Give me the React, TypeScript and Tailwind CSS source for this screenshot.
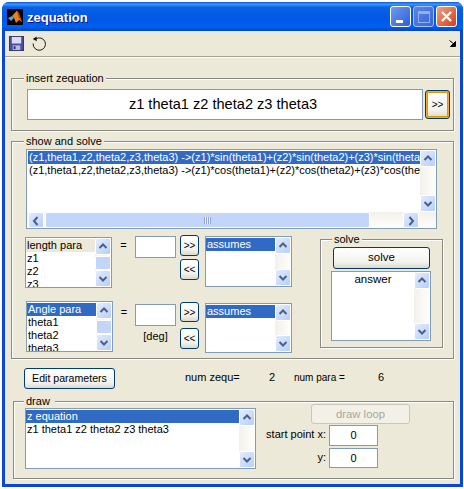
import React from "react";

const Chevron = ({ dir }: { dir: "up" | "down" | "left" | "right" }) => {
  const d = { up: "M2.5 7 L6 3.5 L9.5 7", down: "M2.5 4 L6 7.5 L9.5 4", left: "M7.5 2 L4 6 L7.5 10", right: "M4.5 2 L8 6 L4.5 10" }[dir];
  return (
    <svg width="12" height="11" viewBox="0 0 12 11">
      <path d={d} fill="none" stroke="#4d6185" strokeWidth="2" />
    </svg>
  );
};

const SBtn = ({ dir, className = "" }: { dir: "up" | "down" | "left" | "right"; className?: string }) => (
  <div className={`flex shrink-0 items-center justify-center rounded-[2px] border border-white bg-[linear-gradient(135deg,#e3ebfe,#b8cefa)] ${className}`}>
    <Chevron dir={dir} />
  </div>
);

const VScroll = ({ thumb = false }: { thumb?: boolean }) => (
  <div className="flex h-full w-[16px] shrink-0 flex-col justify-between bg-[linear-gradient(90deg,#f3f1ec,#fefefb)]">
    <SBtn dir="up" className="h-[17px] w-[16px]" />
    {thumb && <div className="h-[14px] w-[16px] rounded-[2px] border border-white bg-[#c4d5fb]" />}
    <SBtn dir="down" className="h-[17px] w-[16px]" />
  </div>
);

const Row = ({ children, sel, soft, className = "" }: { children: React.ReactNode; sel?: boolean; soft?: boolean; className?: string }) => (
  <div className={`h-[13px] whitespace-nowrap text-[11px] leading-[13px] ${sel ? "bg-[#316ac5] text-white" : soft ? "bg-[#ece9d8] text-black" : "text-black"} ${className}`}>
    {children}
  </div>
);

const ListBox = ({ rows, selected, soft, thumb, className = "" }: { rows: string[]; selected?: boolean; soft?: boolean; thumb?: boolean; className?: string }) => (
  <div className={`flex shrink-0 overflow-hidden border border-[#7f9db9] bg-white ${className}`}>
    <div className="min-w-0 flex-1 overflow-hidden pt-px">
      {rows.map((r, i) => (
        <Row key={r} sel={i === 0 && selected} soft={i === 0 && soft} className="pl-px">
          {r}
        </Row>
      ))}
    </div>
    <VScroll thumb={thumb} />
  </div>
);

const Btn = ({ children, className = "" }: { children: React.ReactNode; className?: string }) => (
  <div className={`flex shrink-0 items-center justify-center rounded-[3px] border border-[#003c74] bg-[linear-gradient(180deg,#fff,#f3f3ee_70%,#dcd8cb)] text-black ${className}`}>
    {children}
  </div>
);

const Edit = ({ children, className = "" }: { children?: React.ReactNode; className?: string }) => (
  <div className={`flex shrink-0 items-center justify-center border border-[#7f9db9] bg-white text-black ${className}`}>{children}</div>
);

const Group = ({ label, labelClass = "left-[14px]", className = "", children }: { label: string; labelClass?: string; className?: string; children: React.ReactNode }) => (
  <div className={`relative shrink-0 border border-[#8a8a85] shadow-[inset_1px_1px_0_#fff,1px_1px_0_#fff] ${className}`}>
    <div className={`absolute -top-[8px] whitespace-nowrap bg-[#ece9d8] px-[2px] text-[11px] leading-[14px] text-black ${labelClass}`}>{label}</div>
    {children}
  </div>
);

const MatlabIcon = () => (
  <svg width="16" height="16" viewBox="0 0 16 16" className="shrink-0">
    <rect width="16" height="16" fill="#000" />
    <path d="M1 9 L5 7 L7 9 L4 12 Z" fill="#4aa3d8" />
    <path d="M5 7 L10 1.5 L15 13 L12 11 L9 14 L7 9 Z" fill="#e8801c" />
    <path d="M10 1.5 L11.5 8 L15 13 L12 4 Z" fill="#c9361a" />
  </svg>
);

const Floppy = () => (
  <svg width="15" height="15" viewBox="0 0 16 16">
    <rect x="0.5" y="0.5" width="15" height="15" fill="#4a4f9e" stroke="#2d2f6e" />
    <rect x="3" y="1" width="10" height="7" fill="#d9dcf5" />
    <rect x="4" y="10" width="8" height="5" fill="#b9bcd0" />
    <rect x="5" y="11" width="2" height="3" fill="#2d2f6e" />
  </svg>
);

const Undo = () => (
  <svg width="15" height="15" viewBox="0 0 16 16">
    <path d="M4 3.2 A6.6 6.6 0 1 1 1.2 8" fill="none" stroke="#111" strokeWidth="1" />
    <path d="M0.8 3.2 L5 0.6 L5 5.6 Z" fill="#111" />
  </svg>
);

const LONG1 = "(z1,theta1,z2,theta2,z3,theta3) ->(z1)*sin(theta1)+(z2)*sin(theta2)+(z3)*sin(theta3)";
const LONG2 = "(z1,theta1,z2,theta2,z3,theta3) ->(z1)*cos(theta1)+(z2)*cos(theta2)+(z3)*cos(theta3)";

export default function App() {
  return (
    <div className="h-[489px] w-[464px] overflow-hidden bg-white pl-[2px] pt-[2px] font-['Liberation_Sans',Arial,sans-serif]">
      <div className="flex h-[485px] w-[461px] flex-col overflow-hidden rounded-t-[7px] bg-[#0a47d8] px-[3px] pb-[3px]">
        {/* title bar */}
        <div className="-mx-[3px] flex h-[29px] shrink-0 items-center bg-[linear-gradient(180deg,#0a5be0_0%,#3d95ff_8%,#0a62e8_18%,#0058e4_55%,#0060f0_85%,#0046c8_100%)] pl-[5px] pr-[6px]">
          <MatlabIcon />
          <span className="ml-[4px] pt-[2px] text-[13px] font-bold leading-none text-white [text-shadow:1px_1px_#0f1089]">zequation</span>
          <div className="ml-auto flex items-center gap-[2px]">
            <div className="flex h-[21px] w-[21px] items-end justify-start rounded-[3px] border border-white bg-[linear-gradient(135deg,#6f9bf2,#2a5fd9)] pb-[3px] pl-[5px]">
              <div className="h-[3px] w-[7px] bg-white" />
            </div>
            <div className="flex h-[21px] w-[21px] items-center justify-center rounded-[3px] border border-[#a9c2f4] bg-[linear-gradient(135deg,#5a85e6,#3a66d8)]">
              <div className="h-[12px] w-[12px] border border-t-[3px] border-[#8fb0f0]" />
            </div>
            <div className="flex h-[21px] w-[21px] items-center justify-center rounded-[3px] border border-white bg-[linear-gradient(135deg,#f0a080,#d0401c)]">
              <svg width="13" height="13" viewBox="0 0 13 13">
                <path d="M2 2 L11 11 M11 2 L2 11" stroke="#fff" strokeWidth="2.4" />
              </svg>
            </div>
          </div>
        </div>

        {/* client */}
        <div className="flex min-h-0 flex-1 flex-col bg-[#ece9d8]">
          {/* toolbar */}
          <div className="flex h-[26px] shrink-0 items-center border-b border-b-[#a5a397] pl-[4px] pr-[2px] shadow-[0_1px_0_#fff]">
            <Floppy />
            <div className="ml-[8px]">
              <Undo />
            </div>
            <svg width="8" height="7" viewBox="0 0 8 7" className="ml-auto mr-[1px]">
              <path d="M0.5 0.5 L5 4 M6.5 1.5 L6.5 6.5 L1.5 6.5 Z" stroke="#000" fill="#000" />
            </svg>
          </div>

          {/* insert zequation */}
          <Group label="insert zequation" labelClass="left-[12px]" className="ml-[6px] mt-[21px] h-[53px] w-[443px]">
            <div className="ml-[15px] mt-[10px] flex items-center">
              <Edit className="h-[31px] w-[396px] pr-[4px] text-[14.6px]">z1 theta1 z2 theta2 z3 theta3</Edit>
              <Btn className="ml-[2px] h-[29px] w-[25px] text-[10px] shadow-[inset_0_0_0_1px_#f0a93a,inset_0_0_0_2px_#e59700]">
                <span className="border border-dotted border-transparent">&gt;&gt;</span>
              </Btn>
            </div>
          </Group>

          {/* show and solve */}
          <Group label="show and solve" labelClass="left-[12px]" className="ml-[6px] mt-[10px] h-[218px] w-[443px]">
            <div className="ml-[14px] mt-[7px] flex h-[80px] w-[411px] flex-col overflow-hidden border border-[#7f9db9] bg-white">
              <div className="flex h-[63px] min-h-0">
                <div className="min-w-0 flex-1 overflow-hidden pl-px pt-px">
                  <Row sel className="pl-px">{LONG1}</Row>
                  <Row className="pl-px">{LONG2}</Row>
                </div>
                <VScroll />
              </div>
              <div className="flex h-[16px] shrink-0 bg-[linear-gradient(180deg,#f3f1ec,#fefefb)] pl-px">
                <SBtn dir="left" className="h-[16px] w-[16px]" />
                <div className="ml-px flex h-[16px] w-[325px] items-center justify-center rounded-[2px] border border-white bg-[#c4d5fb]">
                  <div className="h-[7px] w-[7px] bg-[repeating-linear-gradient(90deg,#8ea6d8_0_1px,#eef3fe_1px_2px)]" />
                </div>
                <SBtn dir="right" className="ml-[33px] h-[16px] w-[16px]" />
                <div className="w-[17px] shrink-0" />
              </div>
            </div>

            <div className="mt-[6px] flex">
              <div className="w-[280px] shrink-0">
                {/* first row */}
                <div className="flex">
                  <ListBox rows={["length para", "z1", "z2", "z3"]} soft thumb className="ml-[13px] mt-[2px] h-[51px] w-[87px]" />
                  <div className="mt-[3px] w-[23px] shrink-0 text-center text-[11px] leading-[14px] text-black">=</div>
                  <Edit className="mt-px h-[22px] w-[41px]" />
                  <div className="ml-[4px] flex w-[19px] shrink-0 flex-col gap-[3px]">
                    <Btn className="h-[21px] text-[10px]">&gt;&gt;</Btn>
                    <Btn className="h-[21px] text-[10px]">&lt;&lt;</Btn>
                  </div>
                  <ListBox rows={["assumes"]} selected className="ml-[6px] mt-px h-[51px] w-[87px]" />
                </div>
                {/* second row */}
                <div className="mt-[13px] flex">
                  <ListBox rows={["Angle para", "theta1", "theta2", "theta3"]} selected thumb className="ml-[14px] h-[51px] w-[87px]" />
                  <div className="mt-[4px] w-[22px] shrink-0 text-center text-[11px] leading-[14px] text-black">=</div>
                  <div className="mt-[3px] w-[41px] shrink-0">
                    <Edit className="h-[22px] w-[41px]" />
                    <div className="mt-[3px] text-center text-[11px] leading-[14px] text-black">[deg]</div>
                  </div>
                  <div className="ml-[4px] mt-px flex w-[19px] shrink-0 flex-col gap-[6px]">
                    <Btn className="h-[20px] text-[10px]">&gt;&gt;</Btn>
                    <Btn className="h-[21px] text-[10px]">&lt;&lt;</Btn>
                  </div>
                  <ListBox rows={["assumes"]} selected className="ml-[6px] mt-[2px] h-[50px] w-[87px]" />
                </div>
              </div>

              <Group label="solve" labelClass="left-[11px]" className="ml-[28px] mt-[4px] h-[109px] w-[123px]">
                <Btn className="ml-[12px] mt-[7px] h-[22px] w-[97px] text-[11.5px]">solve</Btn>
                <div className="ml-[10px] mt-[2px] flex h-[70px] w-[100px] overflow-hidden border border-[#7f9db9] bg-white">
                  <div className="flex-1 pt-px text-center text-[11.5px] leading-[13px] text-black">answer</div>
                  <VScroll />
                </div>
              </Group>
            </div>
          </Group>

          {/* parameters row */}
          <div className="ml-[19px] mt-[9px] flex h-[21px] shrink-0 items-center text-[11px] text-black">
            <Btn className="h-[21px] w-[91px] text-[10.6px]">Edit parameters</Btn>
            <span className="ml-[70px] w-[84px] shrink-0 pb-[2px]">num zequ=</span>
            <span className="w-[25px] shrink-0 pb-[3px]">2</span>
            <span className="w-[84px] shrink-0 pb-[3px] text-[10px]">num para =</span>
            <span className="shrink-0 pb-[3px]">6</span>
          </div>

          {/* draw */}
          <Group label="draw" labelClass="left-[10px] pr-[5px]" className="ml-[8px] mt-[12px] h-[78px] w-[441px]">
            <div className="flex">
              <div className="ml-[11px] mt-[6px] flex h-[61px] w-[231px] shrink-0 overflow-hidden border border-[#7f9db9] bg-white">
                <div className="min-w-0 flex-1 overflow-hidden pt-px">
                  <Row sel className="pl-px">z equation</Row>
                  <Row className="pl-px">z1 theta1 z2 theta2 z3 theta3</Row>
                </div>
                <VScroll />
              </div>
              <div className="ml-[6px] w-[150px] shrink-0 text-[11px] text-black">
                <div className="ml-[49px] mt-[2px] flex h-[20px] w-[99px] items-center justify-center rounded-[3px] border border-[#c9c7ba] bg-[#f3f1e7] text-[11.3px] text-[#a8a69a]">
                  draw loop
                </div>
                <div className="mt-px flex h-[21px] items-center">
                  <span className="w-[64px] shrink-0 whitespace-nowrap pb-[2px] text-right">start point x:</span>
                  <Edit className="ml-[3px] h-[21px] w-[49px]">0</Edit>
                </div>
                <div className="mt-[2px] flex h-[20px] items-center">
                  <span className="w-[64px] shrink-0 pb-[2px] text-right">y:</span>
                  <Edit className="ml-[3px] h-[20px] w-[49px]">0</Edit>
                </div>
              </div>
            </div>
          </Group>
        </div>
      </div>
    </div>
  );
}
